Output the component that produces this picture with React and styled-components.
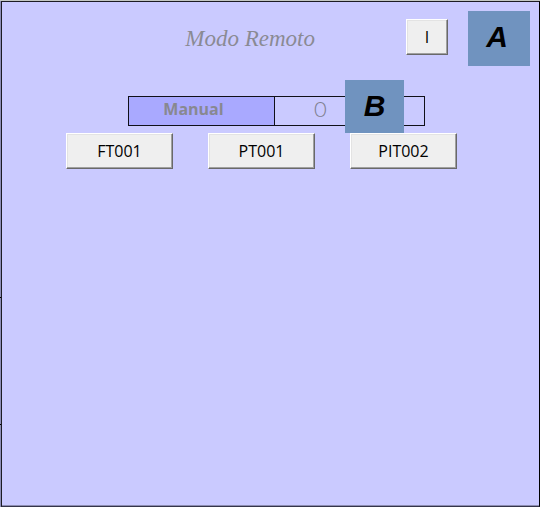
import React from 'react';
import styled, { createGlobalStyle } from 'styled-components';

const GlobalStyle = createGlobalStyle`
  *, *::before, *::after { box-sizing: border-box; }
  body { margin: 0; background: #fff; font-family: "Open Sans", "Noto Sans", sans-serif; }
`;

const Page = styled.div`
  padding-right: 2px;
`;

const Screen = styled.main`
  display: flex;
  min-height: 100vh;
  border-top: 1px solid #c3c7c3;
`;

const Rail = styled.div`
  flex: none;
  width: 1px;
  display: grid;
  grid-template-rows: 298fr 127fr 82fr;
  background: #8f8fb8;
`;

const RailStep = styled.span`
  border-bottom: 1px solid #000;
  &:last-child { border-bottom: 0; }
`;

const Panel = styled.section`
  flex: 1;
  display: flex;
  flex-direction: column;
  gap: 30px;
  background: #cacaff;
  border: 1px solid #1c1c24;
  border-right-color: #000;
  border-bottom-color: #34344a;
  box-shadow: inset 0 -1px 0 #8c8cb0;
`;

const Header = styled.header`
  display: flex;
  justify-content: flex-end;
  align-items: flex-start;
  padding: 9px 9px 0 0;
`;

const Title = styled.h1`
  margin: 14px 91px 0 0;
  font: italic 400 23px/28px "Liberation Serif", serif;
  color: #8a8a94;
`;

const Button = styled.button`
  width: ${(p) => (p.$small ? 42 : 107)}px;
  height: 36px;
  padding: 0;
  background: #efefef;
  border: 1px solid;
  border-color: #fff #696969 #696969 #fff;
  box-shadow: inset -1px -1px 0 #a0a0a0, inset 1px 1px 0 #e3e3e3;
  color: #000;
  font: 400 16px/24px "Open Sans", "Noto Sans", sans-serif;
`;

const HeaderButton = styled(Button)`
  margin: 8px 20px 0 0;
`;

const Tag = styled.strong`
  display: flex;
  align-items: center;
  justify-content: center;
  width: 62px;
  height: 55px;
  padding: 0 4px 4px 0;
  background: #7093bf;
  color: #000;
  font: italic 700 30px/32px "Liberation Sans", Arial, sans-serif;
`;

const Controls = styled.div`
  display: flex;
  flex-direction: column;
  align-items: center;
  gap: 7px;
`;

const Status = styled.div`
  position: relative;
  display: grid;
  grid-template-columns: 146px 1fr;
  width: 297px;
  height: 30px;
  margin-left: 12px;
  border: 1px solid #101018;
`;

const Mode = styled.span`
  padding-right: 16px;
  background: #a9a9ff;
  border-right: 1px solid #101018;
  color: #888890;
  font: 700 16px/25px "Open Sans", "Noto Sans", sans-serif;
  text-align: center;
`;

const Value = styled.output`
  padding-left: 39px;
  color: #808090;
  font: 300 22px/24px Lato, "Open Sans", sans-serif;
`;

const FloatingTag = styled(Tag)`
  position: absolute;
  top: -17px;
  right: 20px;
  width: 59px;
  height: 53px;
  padding: 0 0 2px 0;
`;

const Buttons = styled.div`
  display: flex;
  gap: 35px;
  margin-right: 18px;
`;

export default function App() {
  return (
    <Page>
      <GlobalStyle />
      <Screen>
        <Rail aria-hidden="true"><RailStep /><RailStep /><RailStep /></Rail>
        <Panel>
          <Header>
            <Title>Modo Remoto</Title>
            <HeaderButton type="button" $small>I</HeaderButton>
            <Tag>A</Tag>
          </Header>
          <Controls>
            <Status>
              <Mode id="mode">Manual</Mode>
              <Value aria-labelledby="mode">0</Value>
              <FloatingTag>B</FloatingTag>
            </Status>
            <Buttons>
              <Button type="button">FT001</Button>
              <Button type="button">PT001</Button>
              <Button type="button">PIT002</Button>
            </Buttons>
          </Controls>
        </Panel>
      </Screen>
    </Page>
  );
}
